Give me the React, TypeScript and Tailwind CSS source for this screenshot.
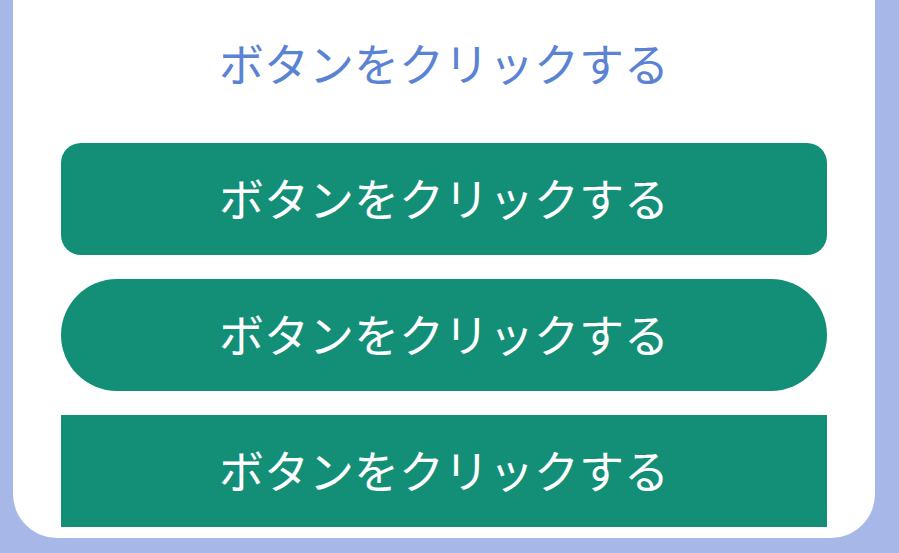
export default function App() {
  const label = "ボタンをクリックする";
  const font = { fontFamily: '"Noto Sans CJK JP", "Noto Sans", sans-serif' };

  return (
    <div className="h-[553px] w-full bg-[#a7b7e8] pl-[13px] pr-[24px] pb-[15px]" style={font}>
      <div className="flex h-full flex-col rounded-b-[44px] bg-white px-12 pt-[30px] pb-[11px]">
        <h1 className="text-center text-[45px] leading-[66px] font-normal text-[#5b83d3]">{label}</h1>
        <div className="mt-[47px] flex flex-col gap-6">
          <button className="h-[112px] w-full rounded-[20px] bg-[#148f77] pb-[3px] text-[45px] text-white">
            {label}
          </button>
          <button className="h-[112px] w-full rounded-full bg-[#148f77] pb-[3px] text-[45px] text-white">
            {label}
          </button>
          <button className="h-[112px] w-full bg-[#148f77] pb-[3px] text-[45px] text-white">{label}</button>
        </div>
      </div>
    </div>
  );
}
